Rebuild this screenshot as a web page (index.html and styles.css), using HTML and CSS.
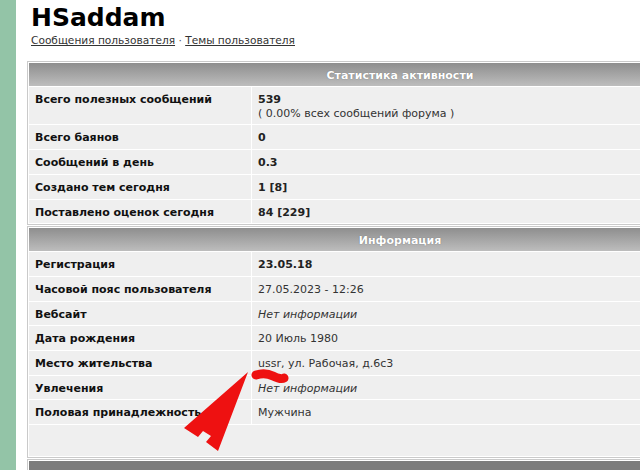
FILE: index.html
```html
<!DOCTYPE html>
<html lang="ru">
<head>
    <meta charset="UTF-8">
    <title>HSaddam</title>
    <link rel="stylesheet" href="styles.css">
</head>
<body>
    <div class="side"></div>

    <div class="page">
        <h1>HSaddam</h1>
        <div class="user-links">
            <a href="#posts">Сообщения пользователя</a> · <a href="#topics">Темы пользователя</a>
        </div>

        <table class="box">
            <tr><th colspan="2">Статистика активности</th></tr>
            <tr>
                <td class="label">Всего полезных сообщений</td>
                <td><b>539</b><br>( 0.00% всех сообщений форума )</td>
            </tr>
            <tr><td class="label">Всего баянов</td><td><b>0</b></td></tr>
            <tr><td class="label">Сообщений в день</td><td><b>0.3</b></td></tr>
            <tr><td class="label">Создано тем сегодня</td><td><b>1 [8]</b></td></tr>
            <tr><td class="label">Поставлено оценок сегодня</td><td><b>84 [229]</b></td></tr>
        </table>

        <table class="box">
            <tr><th colspan="2">Информация</th></tr>
            <tr><td class="label">Регистрация</td><td><b>23.05.18</b></td></tr>
            <tr><td class="label">Часовой пояс пользователя</td><td>27.05.2023 - 12:26</td></tr>
            <tr><td class="label">Вебсайт</td><td><i>Нет информации</i></td></tr>
            <tr><td class="label">Дата рождения</td><td>20 Июль 1980</td></tr>
            <tr><td class="label">Место жительства</td><td>ussr, ул. Рабочая, д.6с3</td></tr>
            <tr><td class="label">Увлечения</td><td><i>Нет информации</i></td></tr>
            <tr><td class="label">Половая принадлежность</td><td>Мужчина</td></tr>
            <tr class="blank"><td colspan="2"></td></tr>
        </table>

        <table class="box dark">
            <tr><th colspan="2">&nbsp;</th></tr>
        </table>
    </div>

    <!-- red marker scribbled over the address row -->
    <svg class="marker" width="640" height="470" viewBox="0 0 640 470">
        <path d="M256 375 Q265 372 273 376 T284 378" fill="none" stroke="#ee1111" stroke-width="9" stroke-linecap="round"/>
        <polygon points="248,372 184,428 198,437 203,431 211,436 206,442 218,451" fill="#ee1111"/>
    </svg>
</body>
</html>
```

FILE: styles.css
```css
* {
    box-sizing: border-box;
}
html, body {
    margin: 0;
    padding: 0;
    height: 100%;
    overflow: hidden;
    background: #fff;
    font-family: 'DejaVu Sans', Verdana, sans-serif;
    font-size: 11px;
    color: #333;
}
body {
    display: flex;
}
.side {
    flex: 0 0 16px;
    background: #93c4a7;
}
.page {
    flex: 0 0 760px;
    padding-left: 11px;
}
h1 {
    margin: 0;
    padding: 3px 0 0 4px;
    font-size: 25px;
    line-height: 30px;
    color: #000;
}
.user-links {
    padding-left: 4px;
    font-size: 10.6px;
    line-height: 14px;
    margin-bottom: 14px;
    color: #555;
}
.user-links a {
    color: #333;
    text-decoration: underline;
}
.box {
    width: 746px;
    border: 1px solid #cacaca;
    border-spacing: 1px;
    background: #fff;
    margin-bottom: 1px;
}
.box th {
    height: 23px;
    padding: 2px 6px 0;
    background: linear-gradient(#8e8e8e, #bdbdbd);
    color: #fff;
    font-weight: bold;
    line-height: 14px;
    text-shadow: 0 0 1px #666;
}
.box td {
    background: #efefef;
    padding: 6px 6px 4px;
    line-height: 13.7px;
    vertical-align: top;
}
.box td.label {
    width: 222px;
    font-weight: bold;
    color: #111;
}
.box td b {
    color: #222;
}
.box .blank td {
    height: 31px;
}
.dark th {
    background: #7c7c7c;
}
.marker {
    position: absolute;
    left: 0;
    top: 0;
    pointer-events: none;
}
```
